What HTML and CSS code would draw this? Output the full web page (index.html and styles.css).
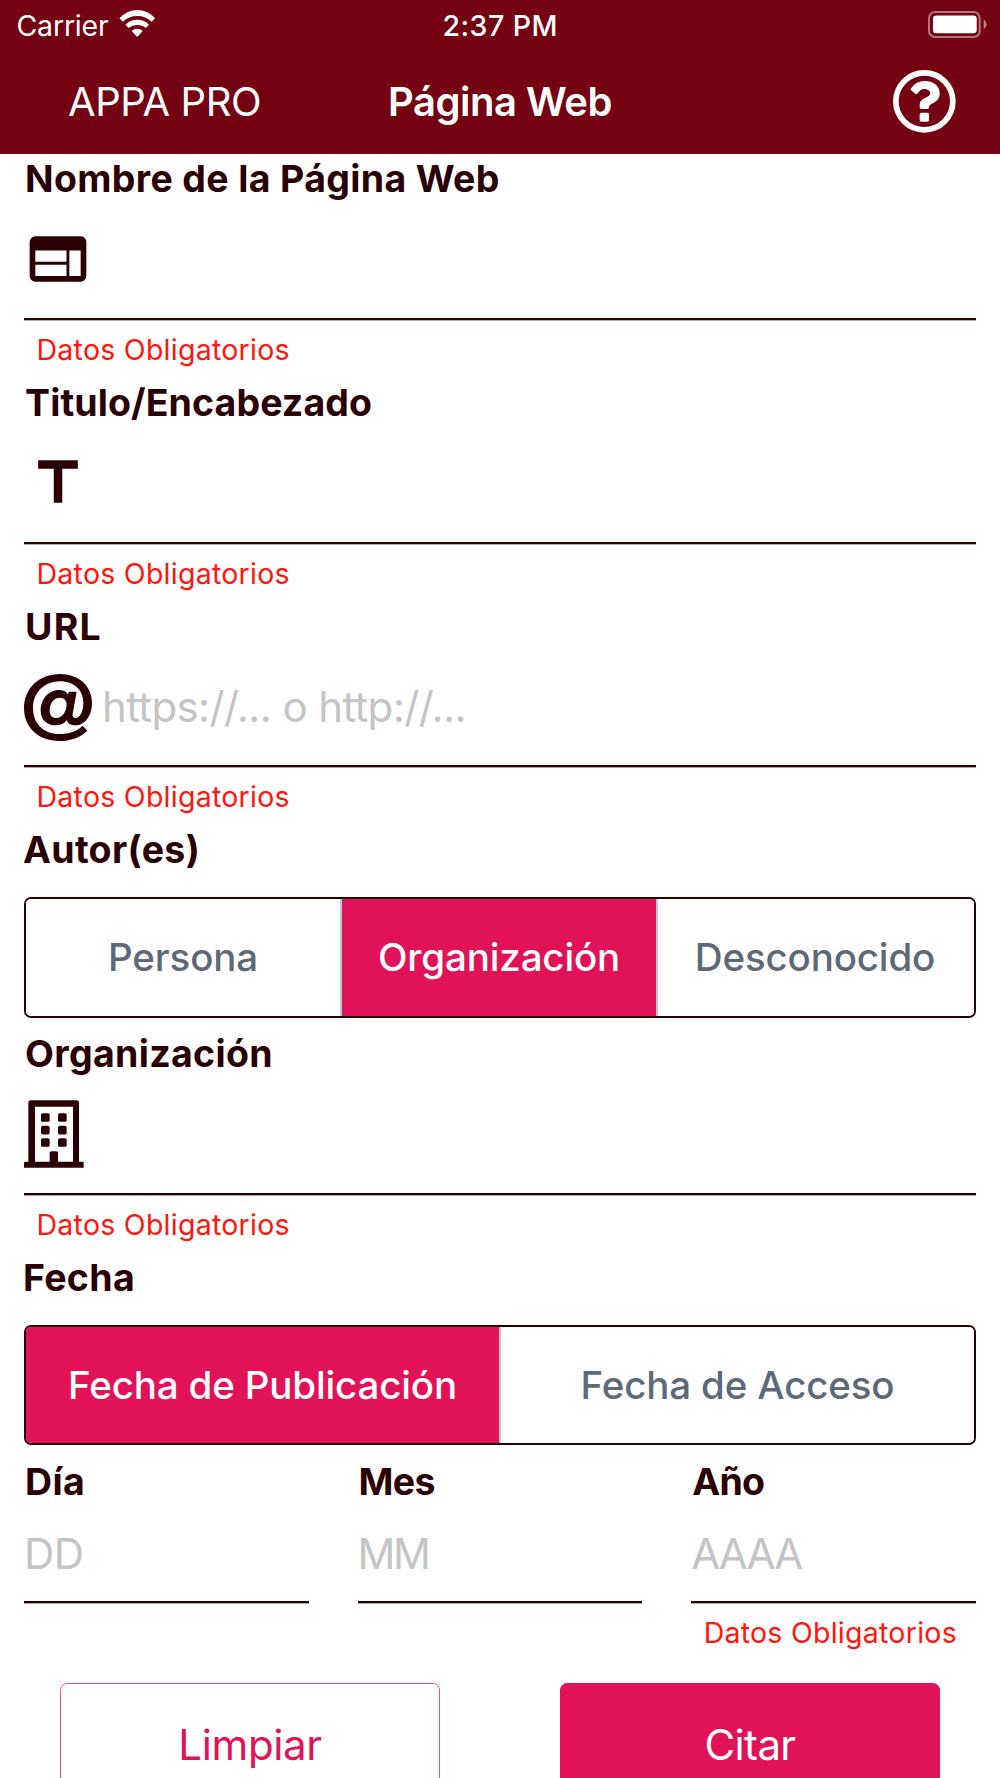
FILE: index.html
```html
<!DOCTYPE html>
<html lang="es">
<head>
<meta charset="utf-8">
<title>Página Web</title>
<link rel="stylesheet" href="styles.css">
</head>
<body>
<header class="header">
  <div class="status">
    <div class="carrier">
      <span>Carrier</span>
      <svg class="wifi" viewBox="0 0 109 81"><path d="M1 25Q24 0 54.500 0T108 25L98 35Q80 18 54.500 18T11 35ZM19 44Q34 29 54.500 29T90 44L80 54Q70 45 54.500 45T29 54ZM38 63Q45 56 54.500 56T71 63L57 79Q54.500 81.500 52 79Z"/></svg>
    </div>
    <span class="time">2:37 PM</span>
    <svg class="battery" viewBox="0 0 178 81"><rect class="case" x="3" y="3" width="153" height="75" rx="18"/><rect x="15" y="13" width="132" height="54" rx="10"/><path class="cap" d="M168 25q9 6 9 15t-9 15z"/></svg>
  </div>
  <nav class="nav">
    <span class="back">APPA PRO</span>
    <h1 class="title">Página Web</h1>
    <svg class="help" viewBox="0 0 188 188"><circle cx="94" cy="94" r="85.500"/><path d="M54 61Q51 58 54 55Q69 33 95 33C121 33 140 47 140 70C140 101 108 98 108 112Q108 117 103 117H85Q80 117 80 112V104C80 82 112 84 112 70C112 62 103 57 94 57C84 57 80 62 73 71Q71 73 68 72ZM85 128H103Q108 128 108 133V150Q108 155 103 155H85Q80 155 80 150V133Q80 128 85 128Z"/></svg>
  </nav>
</header>

<main class="form">
  <section class="field">
    <label class="label wide" for="name">Nombre de la Página Web</label>
    <div class="entry">
      <svg class="icon" viewBox="0 0 24 24"><path fill-rule="evenodd" d="M4 4H20A2 2 0 0 1 22 6V18A2 2 0 0 1 20 20H4A2 2 0 0 1 2 18V6A2 2 0 0 1 4 4ZM4 9V13H15V9ZM4 14V18H15V14ZM16 9V18H20V9Z"/></svg>
      <input class="input" id="name">
    </div>
    <p class="error">Datos Obligatorios</p>
  </section>

  <section class="field">
    <label class="label" for="heading">Titulo/Encabezado</label>
    <div class="entry">
      <svg class="icon" viewBox="0 0 24 24"><path d="M5 4v3h5.500v12h3V7H19V4z"/></svg>
      <input class="input" id="heading">
    </div>
    <p class="error">Datos Obligatorios</p>
  </section>

  <section class="field">
    <label class="label wider" for="url">URL</label>
    <div class="entry">
      <svg class="icon" viewBox="12 15 204 204"><path fill-rule="evenodd" d="M188 173L202 188C182 208 150 219 118 219C55 219 12 178 12 120C12 61 58 18 120 18C176 18 216 54 216 104C216 144 194 172 166 172C152 172 143 167 141 156C133 167 121 172 107 172C80 172 62 154 62 128C62 94 85 66 117 66C130 66 139 70 144 79L146 71H170L158 138C157 146 160 150 166 150C179 150 190 132 190 104C190 66 162 40 120 40C73 40 39 74 39 120C39 167 71 198 118 198C148 198 170 190 188 173ZM119 89C101 89 89 106 89 128C89 142 97 150 109 150C126 150 135 136 139 118C142 101 136 89 119 89Z"/></svg>
      <input class="input" id="url" placeholder="https://... o http://...">
    </div>
    <p class="error">Datos Obligatorios</p>
  </section>

  <section class="group">
    <h2 class="label outer">Autor(es)</h2>
    <div class="segments">
      <button class="segment">Persona</button>
      <button class="segment active">Organización</button>
      <button class="segment last">Desconocido</button>
    </div>
  </section>

  <section class="field">
    <label class="label wide" for="org">Organización</label>
    <div class="entry">
      <svg class="icon building" viewBox="0 0 179 203"><path fill-rule="evenodd" d="M13 185V8Q13 0 21 0H157Q165 0 165 8V185H175Q179 185 179 189V203H0V189Q0 185 4 185ZM33 20V185H77V158Q77 153 82 153H97Q102 153 102 158V185H147V20Z"/><rect x="51" y="39" width="26" height="26" rx="5"/><rect x="102" y="39" width="26" height="26" rx="5"/><rect x="51" y="77" width="26" height="26" rx="5"/><rect x="102" y="77" width="26" height="26" rx="5"/><rect x="51" y="114" width="26" height="26" rx="5"/><rect x="102" y="114" width="26" height="26" rx="5"/></svg>
      <input class="input" id="org">
    </div>
    <p class="error">Datos Obligatorios</p>
  </section>

  <section class="group">
    <h2 class="label outer">Fecha</h2>
    <div class="segments">
      <button class="segment active">Fecha de Publicación</button>
      <button class="segment">Fecha de Acceso</button>
    </div>
  </section>

  <div class="dates">
    <section class="field">
      <label class="label wide" for="day">Día</label>
      <div class="entry short"><input class="input" id="day" placeholder="DD"></div>
    </section>
    <section class="field">
      <label class="label narrow" for="month">Mes</label>
      <div class="entry short"><input class="input month" id="month" placeholder="MM"></div>
    </section>
    <section class="field">
      <label class="label narrow" for="year">Año</label>
      <div class="entry short"><input class="input year" id="year" placeholder="AAAA"></div>
      <p class="error">Datos Obligatorios</p>
    </section>
  </div>

  <div class="actions">
    <button class="button">Limpiar</button>
    <button class="button primary">Citar</button>
  </div>
</main>
</body>
</html>
```

FILE: styles.css
```css
* { box-sizing: border-box; }

body {
  margin: 0;
  height: 1778px;
  overflow: hidden;
  background: #fff;
  color: #2b0004;
  font-family: Inter, "Liberation Sans", sans-serif;
}

h1, h2, p { margin: 0; font-weight: inherit; }
svg { display: block; flex: none; }

/* Header */
.header {
  height: 153.7px;
  background: #750212;
  color: #fff;
  fill: #fff;
}

.status {
  display: grid;
  grid-template-columns: 1fr auto 1fr;
  align-items: center;
  height: 51px;
  padding: 0 13px 0 16.500px;
  font-size: 28.500px;
  line-height: 51px;
}

.carrier { display: flex; align-items: center; gap: 10.500px; letter-spacing: -0.2px; }
.wifi { width: 36.500px; height: 27px; margin-bottom: 4px; }
.time { margin-left: -3px; font-weight: 500; letter-spacing: 0.5px; }
.battery { width: 59px; height: 27px; justify-self: end; margin-bottom: 3px; }
.case { fill: none; stroke: #fff; stroke-opacity: 0.45; stroke-width: 6; }
.cap { fill-opacity: 0.5; }

.nav {
  display: grid;
  grid-template-columns: 1fr auto 1fr;
  align-items: center;
  height: 101px;
  padding: 0 44px 0 68px;
  font-size: 40px;
}
.back { letter-spacing: -0.41px; }
.title { font-size: 40px; font-weight: 600; letter-spacing: -0.5px; margin-left: -24px; }
.help { width: 62.700px; height: 62.700px; justify-self: end; }
.help circle { fill: none; stroke: #fff; stroke-width: 17; }

/* Fields */
.form { padding: 0.6px 24px 0; }

.label {
  display: block;
  height: 48.300px;
  padding-left: 1px;
  font-size: 37.500px;
  font-weight: 700;
  line-height: 50px;
  letter-spacing: 0.1px;
}
.label.wide { letter-spacing: 0.33px; }
.label.wider { letter-spacing: 1.2px; }
.label.narrow { letter-spacing: -0.7px; }
.label.outer { margin-left: -1px; padding: 0; letter-spacing: 0.3px; }

.entry {
  display: flex;
  align-items: center;
  gap: 10px;
  height: 117.400px;
  padding-bottom: 2px;
  border-bottom: 2px solid #2b0004;
  box-shadow: 0 1px rgba(43, 0, 4, 0.35);
  fill: #2b0004;
}
.entry.short { height: 97.700px; padding: 0; }
.icon { width: 68px; height: 68px; }
.icon.building { width: 59.700px; }

.input {
  flex: 1;
  width: 100%;
  min-width: 0;
  height: 60px;
  padding: 0;
  border: 0;
  background: none;
  color: inherit;
  font: 400 42px Inter, "Liberation Sans", sans-serif;
  letter-spacing: -0.63px;
}
.input::placeholder { color: #c4c4c6; opacity: 1; }
.input.month { letter-spacing: -2.4px; }
.input.year { letter-spacing: -1.9px; }

.error {
  height: 58px;
  padding-left: 12.500px;
  color: #ff160c;
  font-size: 28.500px;
  line-height: 59.500px;
  letter-spacing: 0.26px;
  white-space: nowrap;
}

/* Segmented controls */
.segments {
  display: flex;
  height: 120.500px;
  margin: 23.500px 0 11.800px;
  border: 2px solid #2b0004;
  border-radius: 7px;
  overflow: hidden;
}
.segment {
  flex: 1 1 0;
  padding: 0;
  border: 0;
  border-left: 2px solid #bac6d0;
  background: #fff;
  color: #5e6977;
  font: 500 38.500px Inter, "Liberation Sans", sans-serif;
  letter-spacing: -0.15px;
}
.segment:first-child { border-left: 0; }
.segment.active { background: #e21259; color: #fff; }
.segment.last { padding-right: 2px; }

/* Date row */
.dates {
  display: grid;
  grid-template-columns: repeat(3, minmax(0, 1fr));
  gap: 48.700px;
}

/* Actions */
.actions {
  display: grid;
  grid-template-columns: 1fr 1fr;
  gap: 120px;
  margin-top: 22px;
  padding: 0 36px;
}
.button {
  height: 123px;
  padding: 0;
  border: 1px solid #ea5187;
  border-radius: 7px;
  background: #fff;
  color: #e21259;
  font: 400 42px Inter, "Liberation Sans", sans-serif;
  letter-spacing: -0.36px;
}
.button.primary { border-color: #e21259; background: #e21259; color: #fff; letter-spacing: -0.6px; }
```
